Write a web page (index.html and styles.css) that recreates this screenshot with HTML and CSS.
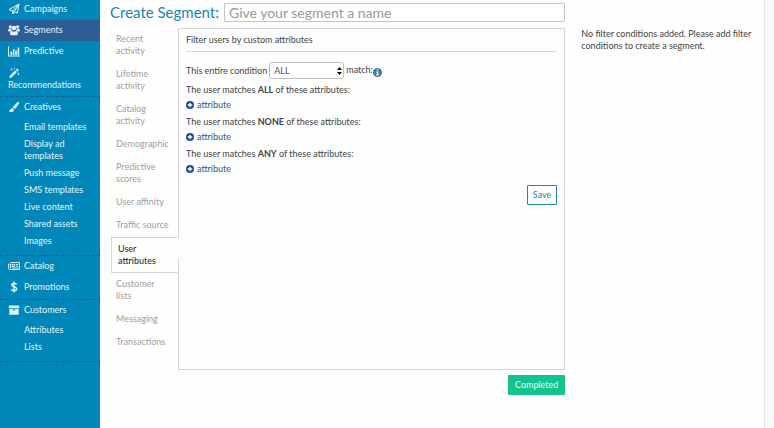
FILE: index.html
```html
<!DOCTYPE html>
<html lang="en">
<head>
  <meta charset="UTF-8">
  <meta name="viewport" content="width=device-width, initial-scale=1.0">
  <title>Create Segment</title>
  <link rel="stylesheet" href="styles.css">
</head>
<body>

<nav class="sidebar">
  <div class="group">
    <a class="item" href="#"><svg class="icon" viewBox="0 0 12 12"><path d="M1 6.6 11 1 9.4 10 6.2 8.7 4.7 11V8L1 6.6ZM4.7 8 11 1 6.2 8.7" fill="none" stroke="currentColor" stroke-linejoin="round"/></svg>Campaigns</a>
    <a class="item active" href="#"><svg class="icon" viewBox="0 0 12 12"><circle cx="2.4" cy="2.8" r="1.6"/><circle cx="9.6" cy="2.8" r="1.6"/><circle cx="6" cy="4" r="2.3"/><path d="M.2 7.6V6Q.2 4.8 1.3 4.8H3.2Q3.5 6.2 4.2 6.6 2.8 6.8 2.3 7.6ZM11.8 7.6V6q0-1.2-1.1-1.2H8.8Q8.5 6.2 7.8 6.6 9.2 6.8 9.7 7.6ZM2 9.8Q2 7 4 7 6 8.3 8 7q2 0 2 2.8 0 1.4-1.4 1.4H3.4Q2 11.2 2 9.8Z"/></svg>Segments</a>
    <a class="item" href="#"><svg class="icon" viewBox="0 0 12 12"><path d="M0 1.5h1v9h11v1H0ZM2.4 6.5H4V10H2.4ZM4.8 4H6.4v6H4.8ZM7.2 5.5H8.8V10H7.2ZM9.6 2.5h1.6V10H9.6Z"/></svg>Predictive</a>
    <a class="item stacked" href="#"><svg class="icon" viewBox="0 0 12 12"><path d="M1 9.400 7.200 3.200 9 5 2.800 11.200ZM7.800 2.600 9 1.400 10.800 3.200 9.600 4.400ZM3.500.8l.4 1.100 1.100.4-1.100.4-.4 1.100-.4-1.100L2 2.300l1.100-.4ZM6.300.2l.3.8.8.3-.8.3-.3.8-.3-.8-.8-.3.8-.3ZM10.500 5.600l.4 1 1 .4-1 .4-.4 1-.4-1-1-.4 1-.4Z"/></svg>Recommendations</a>
  </div>
  <div class="group">
    <a class="item" href="#"><svg class="icon" viewBox="0 0 12 12"><path d="M10.800.9q.9.700.1 1.900L7.700 7.200Q7 8 6.100 7.600L5 6.600Q4.700 5.800 5.400 5.200L9.300 1.200q.8-.7 1.500-.3ZM4.400 7 5.900 8.400Q5.900 11 3.300 11.200 1.200 11.200.9 9q.8.500 1.300-.3Q2.800 7 4.400 7Z"/></svg>Creatives</a>
    <ul class="sub">
      <li><a href="#">Email templates</a></li>
      <li><a href="#">Display ad templates</a></li>
      <li><a href="#">Push message</a></li>
      <li><a href="#">SMS templates</a></li>
      <li><a href="#">Live content</a></li>
      <li><a href="#">Shared assets</a></li>
      <li><a href="#">Images</a></li>
    </ul>
  </div>
  <div class="group">
    <a class="item" href="#"><svg class="icon" viewBox="0 0 12 12"><path d="M2.5 2.5H11.5V9.5H1.5Q.5 9.5.5 8.5V4H2.5V8.5M4 4.3H6.5V6.5H4ZM7.8 4.5H10.3M7.8 6.3H10.3M4 8H10.3" fill="none" stroke="currentColor" stroke-width=".9"/></svg>Catalog</a>
    <a class="item" href="#"><svg class="icon" viewBox="0 0 12 12"><path d="M6 .5V11.5M8.6 3.5Q7.6 2.4 6 2.4 3.7 2.4 3.7 4.1 3.7 5.4 6 5.9 8.6 6.4 8.6 8 8.6 9.7 6 9.7 4.2 9.7 3.2 8.5" fill="none" stroke="currentColor" stroke-width="1.4"/></svg>Promotions</a>
  </div>
  <div class="group">
    <a class="item" href="#"><svg class="icon" viewBox="0 0 12 12"><path d="M.8 1.500H11.200V4H.8ZM1.300 4.700H10.700V10.700H1.300ZM4.600 5.500v1H7.400v-1Z" fill-rule="evenodd"/></svg>Customers</a>
    <ul class="sub">
      <li><a href="#">Attributes</a></li>
      <li><a href="#">Lists</a></li>
    </ul>
  </div>
</nav>

<main class="page">
  <section class="builder">
    <div class="title-row">
      <h1><label for="segmentName">Create Segment:</label></h1>
      <input type="text" id="segmentName" placeholder="Give your segment a name">
    </div>
    <div class="editor">
      <nav class="tabs">
        <a href="#">Recent activity</a>
        <a href="#">Lifetime activity</a>
        <a href="#">Catalog activity</a>
        <a href="#">Demographic</a>
        <a href="#">Predictive scores</a>
        <a href="#">User affinity</a>
        <a href="#">Traffic source</a>
        <a class="active" href="#">User attributes</a>
        <a href="#">Customer lists</a>
        <a href="#">Messaging</a>
        <a href="#">Transactions</a>
      </nav>
      <div class="panel">
        <h2>Filter users by custom attributes</h2>
        <div class="condition">
          <label for="matchType">This entire condition</label>
          <span class="select">
            <select id="matchType">
              <option>ALL</option>
              <option>NONE</option>
              <option>ANY</option>
            </select>
            <svg class="arrows" viewBox="0 0 5 8"><path d="M0 3 2.5 0 5 3ZM0 5H5L2.5 8Z"/></svg>
          </span>
          <span class="match">match:<svg class="info" viewBox="0 0 9 9"><circle cx="4.5" cy="4.5" r="4.5"/><path d="M3.8 1.3h1.5v1.3H3.8ZM3.2 3.5h2.1v3h.6v1H3.2v-1h.6v-2h-.6Z" fill="#fff"/></svg></span>
        </div>
        <div class="rule">
          <p>The user matches <b>ALL</b> of these attributes:</p>
          <button class="add"><svg viewBox="0 0 8 8"><circle cx="4" cy="4" r="4"/><path d="M4 1.7V6.3M1.7 4H6.3" stroke="#fff" stroke-width="1.4"/></svg>attribute</button>
        </div>
        <div class="rule">
          <p>The user matches <b>NONE</b> of these attributes:</p>
          <button class="add"><svg viewBox="0 0 8 8"><circle cx="4" cy="4" r="4"/><path d="M4 1.7V6.3M1.7 4H6.3" stroke="#fff" stroke-width="1.4"/></svg>attribute</button>
        </div>
        <div class="rule">
          <p>The user matches <b>ANY</b> of these attributes:</p>
          <button class="add"><svg viewBox="0 0 8 8"><circle cx="4" cy="4" r="4"/><path d="M4 1.7V6.3M1.7 4H6.3" stroke="#fff" stroke-width="1.4"/></svg>attribute</button>
        </div>
        <button class="save">Save</button>
      </div>
    </div>
    <button class="completed">Completed</button>
  </section>
  <aside class="summary">
    <p>No filter conditions added. Please add filter conditions to create a segment.</p>
  </aside>
</main>

</body>
</html>
```
FILE: styles.css
```css
:root {
  --sidebar-color: #0087b9;
  --sidebar-active-color: #2c5d94;
  --sidebar-line-color: #14608f;
  --text-color: #444;
  --muted-color: #a0a0a0;
  --border-color: #d4d4da;
  --link-color: #235a8c;
  --title-color: #1785b0;
  --green: #12c28f;
}
* {
  box-sizing: border-box;
}
body {
  font-family: 'Lato', sans-serif;
  font-size: 9px;
  line-height: 12px;
  min-height: 100vh;
  margin: 0;
  display: flex;
  background-color: #f8f9fb;
  color: var(--text-color);
}
a {
  color: inherit;
  text-decoration: none;
}
h1, h2, p, ul {
  margin: 0;
  padding: 0;
  font-weight: normal;
}
button, input, select {
  font-family: inherit;
  font-size: inherit;
  line-height: 12px;
}
.sidebar {
  width: 100px;
  flex-shrink: 0;
  background-color: var(--sidebar-color);
  color: #e4f6fd;
}
.group {
  padding-bottom: 1px;
  border-bottom: 1px dashed var(--sidebar-line-color);
}
.item {
  display: flex;
  align-items: center;
  gap: 4px;
  padding: 4px 8px 5px;
}
.group:first-child .item:first-child {
  padding-top: 3px;
}
.item.active {
  background-color: var(--sidebar-active-color);
}
.item.stacked {
  flex-direction: column;
  align-items: flex-start;
  gap: 0;
  padding: 5px 8px 4px;
}
.icon {
  width: 12px;
  height: 12px;
  fill: currentColor;
}
.sub {
  list-style: none;
  padding: 1px 8px 4px 24px;
}
.sub a {
  display: block;
  padding: 2px 0 3px;
}
.page {
  flex: 1;
  display: flex;
  gap: 16px;
  margin-right: 9px;
  padding: 3px 10px 8px 10px;
  border-right: 1px solid #e3e6ec;
  background-color: #fefefe;
}
.builder {
  flex: 29;
  display: flex;
  flex-direction: column;
}
.title-row {
  display: flex;
  gap: 5px;
}
h1 {
  font-size: 15px;
  line-height: 18px;
  color: var(--title-color);
}
.title-row input {
  flex: 1;
  min-width: 0;
  height: 19px;
  padding: 0 4px;
  border: 1px solid #c4c4c8;
  border-radius: 1px;
  background-color: #fff;
  font-size: 14px;
}
input::placeholder {
  color: #999;
}
.editor {
  display: flex;
  margin-top: 6px;
}
.tabs {
  width: 68px;
  flex-shrink: 0;
  padding-left: 1px;
  color: var(--muted-color);
}
.tabs a {
  display: block;
  padding: 5px 8px 6px 5px;
}
.tabs .active {
  position: relative;
  padding: 5px 20px 5px 6px;
  border: 1px solid var(--border-color);
  border-right: none;
  color: #222;
}
/* hides the panel border beside the open tab */
.tabs .active::after {
  content: "";
  position: absolute;
  top: 0;
  right: -1px;
  width: 1px;
  height: 20px;
  background-color: #fefefe;
}
.panel {
  flex: 1;
  min-height: 342px;
  padding: 5px 7px;
  border: 1px solid var(--border-color);
}
h2 {
  padding-bottom: 5px;
  border-bottom: 1px solid var(--border-color);
  font-size: 9px;
}
.condition {
  display: flex;
  align-items: center;
  gap: 2px;
  margin: 10px 0 5px;
}
.select {
  position: relative;
}
select {
  display: block;
  appearance: none;
  width: 75px;
  height: 17px;
  padding: 0 4px;
  border: 1px solid #bdbdc6;
  border-radius: 3px;
  background-color: #fff;
  color: #555;
}
.arrows {
  position: absolute;
  top: 5px;
  right: 2px;
  width: 5px;
  height: 8px;
}
.match {
  display: flex;
}
.info {
  width: 9px;
  height: 9px;
  margin-top: 4px;
  fill: #44789f;
}
.rule {
  margin-bottom: 5px;
}
.add {
  display: flex;
  align-items: center;
  gap: 3px;
  margin-top: 3px;
  padding: 0;
  border: none;
  background: none;
  color: var(--link-color);
  cursor: pointer;
}
.add svg {
  width: 8px;
  height: 8px;
  fill: #175086;
}
.save {
  display: block;
  margin: 10px 0 0 auto;
  padding: 3px 5px;
  border: 1px solid var(--title-color);
  border-radius: 1px;
  background-color: #fff;
  color: var(--title-color);
  cursor: pointer;
}
.completed {
  align-self: flex-end;
  margin-top: 5px;
  padding: 4px 7px;
  border: none;
  border-radius: 1px;
  background-color: var(--green);
  color: #e8fff7;
  cursor: pointer;
}
.summary {
  flex: 11;
  padding-top: 25px;
}
```
